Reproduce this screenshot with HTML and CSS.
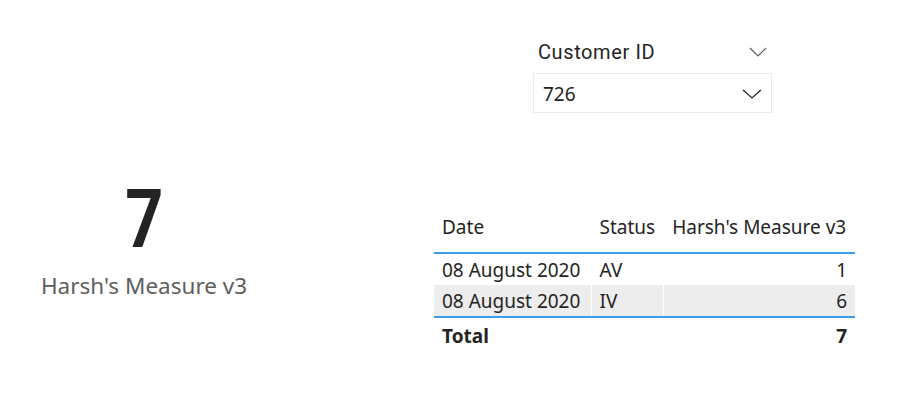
FILE: index.html
```html
<!DOCTYPE html>
<html>
<head>
<meta charset="utf-8">
<link rel="stylesheet" href="styles.css">
</head>
<body>
<div class="page">
  <div class="card">
    <div class="card-value">7</div>
    <div class="card-label">Harsh's Measure v3</div>
  </div>
  <div class="right">
    <div class="slicer">
      <div class="slicer-head">
        <span class="slicer-title">Customer ID</span>
        <svg class="chev chev-head" width="18" height="10" viewBox="0 0 18 10"><path d="M1 1 L9 9 L17 1" fill="none" stroke="#605e5c" stroke-width="1.2"/></svg>
      </div>
      <div class="slicer-box">
        <span class="slicer-value">726</span>
        <svg class="chev" width="20" height="10" viewBox="0 0 20 10"><path d="M1 1 L10 9 L19 1" fill="none" stroke="#252423" stroke-width="1.3"/></svg>
      </div>
    </div>
    <table class="grid">
      <thead>
        <tr><th class="c1">Date</th><th class="c2">Status</th><th class="c3">Harsh's Measure v3</th></tr>
      </thead>
      <tbody>
        <tr><td>08 August 2020</td><td>AV</td><td class="num">1</td></tr>
        <tr class="alt"><td>08 August 2020</td><td>IV</td><td class="num">6</td></tr>
      </tbody>
      <tfoot>
        <tr><td>Total</td><td></td><td class="num">7</td></tr>
      </tfoot>
    </table>
  </div>
</div>
</body>
</html>
```

FILE: styles.css
```css
* { box-sizing: border-box; }
html, body { margin: 0; padding: 0; background: #ffffff; }
body { width: 908px; height: 412px; overflow: hidden; font-family: "Noto Sans", "Open Sans", sans-serif; color: #252423; }
.page { display: grid; grid-template-columns: 288px 1fr; height: 412px; }
.card { display: flex; flex-direction: column; align-items: center; padding-top: 178px; }
.card-value { font-family: Roboto, sans-serif; font-weight: 700; font-size: 81px; line-height: 84px; color: #252423; transform: scaleX(0.82); }
.card-label { font-size: 22.5px; line-height: 28px; color: #605e5c; margin-top: 10px; }
.right { display: flex; flex-direction: column; }
.slicer { margin-left: 245px; width: 239px; margin-top: 36px; }
.slicer-head { display: flex; align-items: center; justify-content: space-between; height: 32px; padding-left: 5px; padding-right: 5px; }
.slicer-title { font-family: Roboto, sans-serif; font-weight: 400; font-size: 20px; letter-spacing: 0.6px; color: #252423; }
.slicer-box { margin-top: 5px; height: 40px; border: 1px solid #eaeaea; display: flex; align-items: center; justify-content: space-between; padding: 2px 9px 0 9px; }
.slicer-value { font-size: 19px; color: #252423; }
.grid { margin-left: 146px; margin-top: 95px; width: 421px; border-collapse: collapse; font-size: 19px; color: #252423; }
.grid th { font-weight: 400; text-align: left; padding: 8px 8px 14px 8px; line-height: 22px; border-bottom: 2px solid #3c9cec; }
.grid th.c1 { width: 157px; }
.grid th.c2 { width: 72px; border-left: 1px solid #ffffff; }
.grid th.c3 { border-left: 1px solid #ffffff; }
.grid td { padding: 5px 8px 4px 8px; height: 31px; line-height: 22px; }
.grid td + td { border-left: 1px solid #ffffff; }
.grid tr.alt td { background: #ededed; }
.grid tbody tr:last-child td { border-bottom: 2px solid #3c9cec; }
.grid tfoot td { font-weight: 700; height: 34px; padding-top: 6px; }
.grid .num { text-align: right; }
```
